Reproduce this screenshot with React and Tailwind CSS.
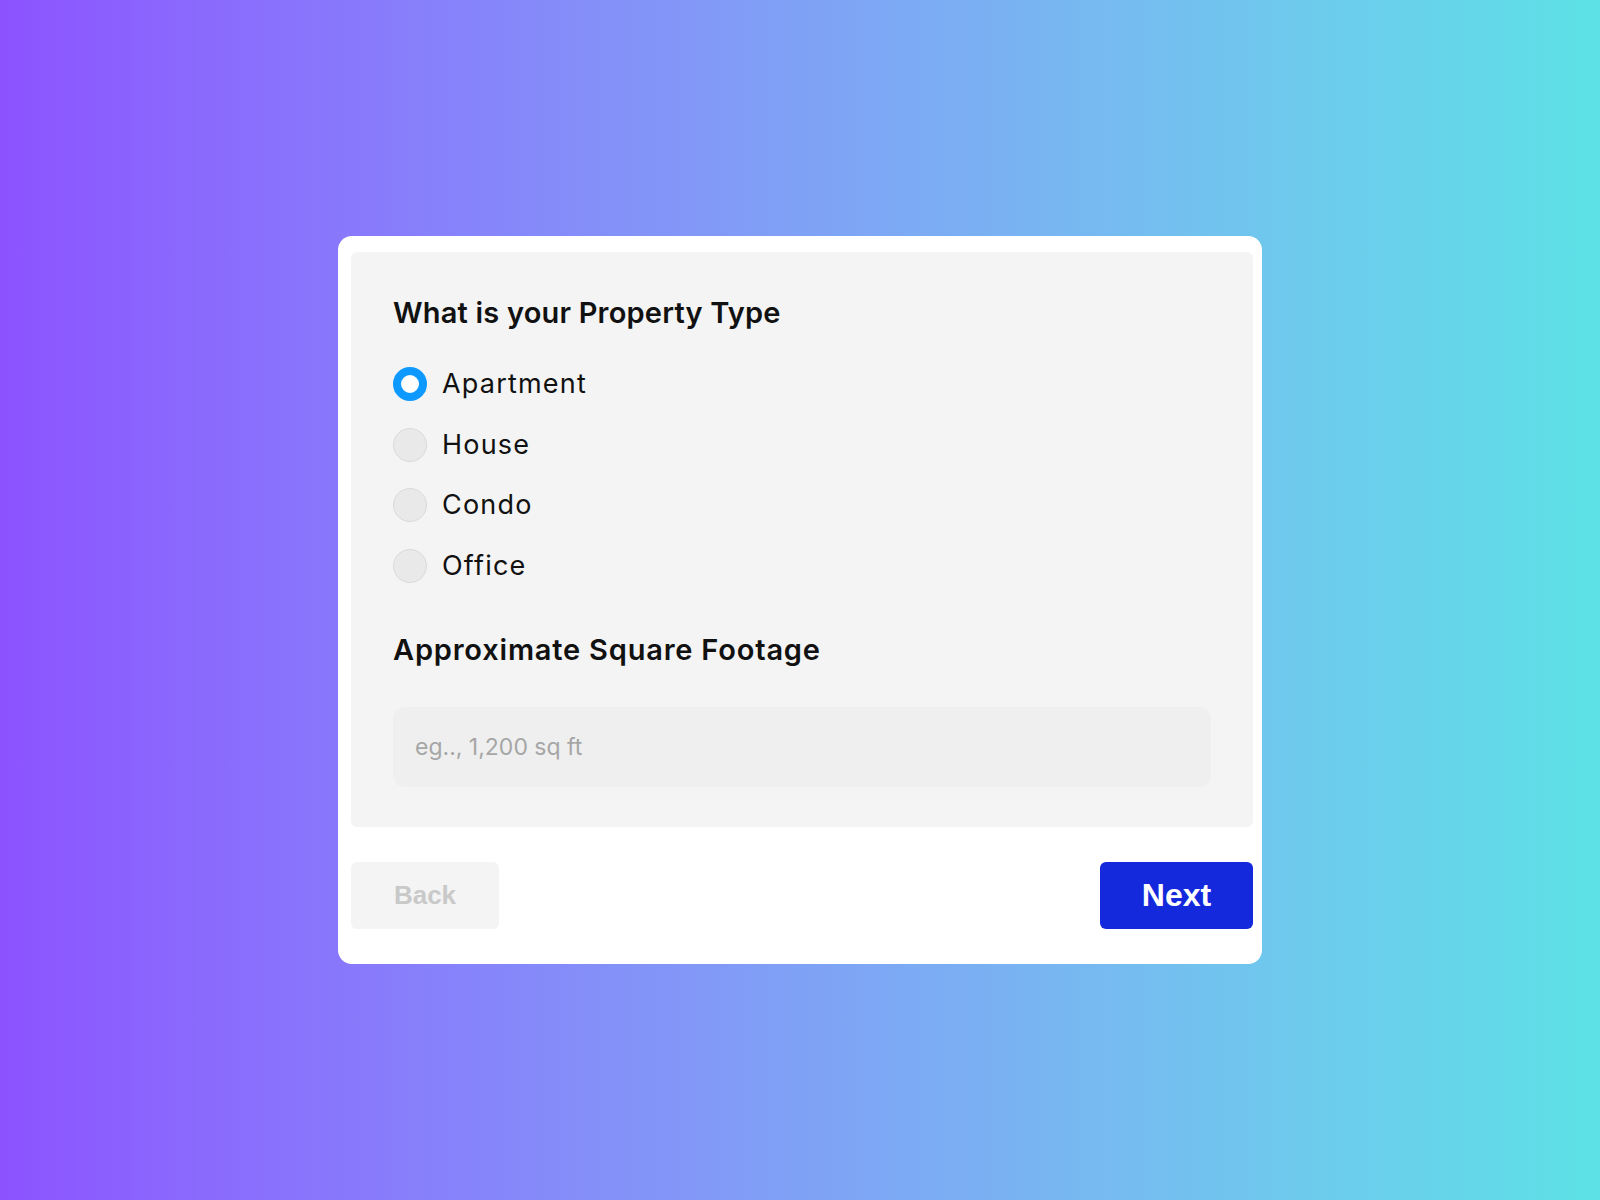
import React, { useState } from "react";

const OPTIONS = ["Apartment", "House", "Condo", "Office"];

const Radio = ({ checked }) =>
  checked ? (
    <span className="w-[34px] h-[34px] rounded-full border-[8px] border-[#0d99ff] bg-white shrink-0" />
  ) : (
    <span className="w-[34px] h-[34px] rounded-full border border-[#dadada] bg-[#e9e9e9] shrink-0" />
  );

export default function App() {
  const [type, setType] = useState("Apartment");
  const [sqft, setSqft] = useState("");

  return (
    <div className="w-full h-screen flex items-center justify-center bg-gradient-to-r from-[#8c52ff] to-[#5ce1e6] font-['Inter',sans-serif]">
      <div className="w-[924px] bg-white rounded-[14px] pl-[13px] pr-[9px] pt-[16px] pb-[35px]">
        <div className="bg-[#f4f4f4] rounded-[6px] px-[42px] pt-[40px] pb-[40px]">
          <h2 className="text-[29px] leading-[42px] font-semibold text-[#111] tracking-[0.2px]">
            What is your Property Type
          </h2>

          <div className="mt-[33px] flex flex-col gap-[26.5px]">
            {OPTIONS.map((opt) => (
              <label
                key={opt}
                onClick={() => setType(opt)}
                className="flex items-center gap-[15px] h-[34px] cursor-pointer"
              >
                <Radio checked={type === opt} />
                <span className="text-[27px] leading-[34px] text-[#111] tracking-[1.2px]">
                  {opt}
                </span>
              </label>
            ))}
          </div>

          <h2 className="mt-[46px] text-[29px] leading-[42px] font-semibold text-[#111] tracking-[0.8px]">
            Approximate Square Footage
          </h2>

          <input
            value={sqft}
            onChange={(e) => setSqft(e.target.value)}
            placeholder="eg.., 1,200 sq ft"
            className="mt-[36px] w-full h-[80px] rounded-[12px] bg-[#efefef] pl-[22px] text-[23px] text-[#333] placeholder:text-[#a6a6a6] outline-none"
          />
        </div>

        <div className="mt-[35px] flex justify-between items-center">
          <button className="w-[148px] h-[67px] rounded-[6px] bg-[#f4f4f4] text-[#c9c9c9] text-[26px] font-bold font-['Liberation_Sans',sans-serif]">
            Back
          </button>
          <button className="w-[153px] h-[67px] rounded-[6px] bg-[#1428dc] text-white text-[32px] font-bold font-['Liberation_Sans',sans-serif]">
            Next
          </button>
        </div>
      </div>
    </div>
  );
}
